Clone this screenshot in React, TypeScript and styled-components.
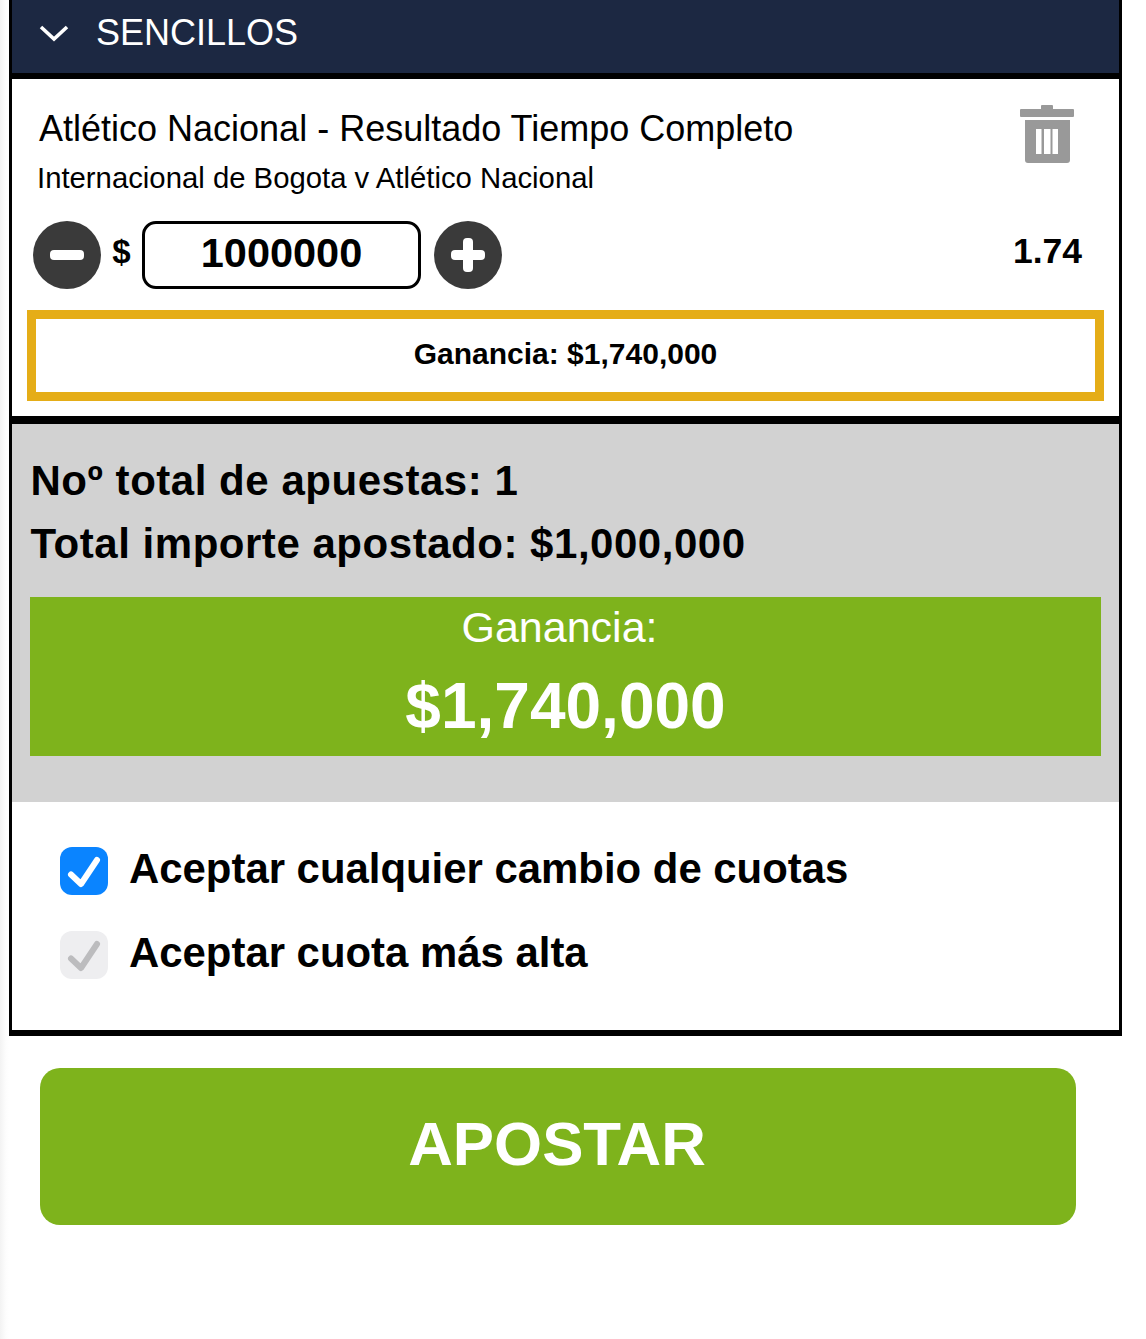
import React from 'react';
import styled, { createGlobalStyle } from 'styled-components';

const GlobalStyle = createGlobalStyle`
  html, body {
    margin: 0;
    padding: 0;
    background: #fff;
    font-family: "Liberation Sans", Arial, sans-serif;
    color: #000;
  }
`;

const Page = styled.div`
  width: 1146px;
  height: 1339px;
  box-sizing: border-box;
  padding-left: 9px;
  overflow: hidden;
  background: linear-gradient(90deg, #f3f3f3 0, #fdfdfd 6px, #fff 9px);
`;

const Slip = styled.section`
  width: 1113px;
  box-sizing: border-box;
  border: solid #000;
  border-width: 0 3px 6px;
`;

const Header = styled.header`
  height: 73px;
  box-sizing: border-box;
  display: flex;
  align-items: center;
  gap: 27px;
  padding: 0 0 8px 27px;
  background: #1c2842;
  color: #fff;
  font-size: 36px;
`;

const Bet = styled.div`
  border-top: 6px solid #000;
  border-bottom: 8px solid #000;
  background: #fff;
  height: 337px;
  padding: 0 15px;
  display: flex;
  flex-direction: column;
`;

const BetTop = styled.div`
  display: flex;
  justify-content: space-between;
  height: 142px;
`;

const BetInfo = styled.div`
  padding: 28.5px 0 0 12px;
`;

const Market = styled.div`
  font-size: 36px;
  line-height: 42px;
`;

const Match = styled.div`
  font-size: 29.3px;
  line-height: 34px;
  margin: 11.5px 0 0 -2px;
`;

const Trash = styled.svg`
  width: 56px;
  height: 60px;
  margin: 26px 28px 0 0;
  flex: none;
`;

const StakeRow = styled.div`
  display: flex;
  align-items: center;
  height: 68px;
  padding-left: 6px;
`;

const RoundButton = styled.svg`
  width: 68px;
  height: 68px;
  flex: none;
`;

const Dollar = styled.span`
  font-size: 33px;
  font-weight: 700;
  width: 41px;
  text-align: center;
  margin-top: -6px;
`;

const StakeInput = styled.div`
  width: 279px;
  height: 68px;
  box-sizing: border-box;
  border: 3px solid #000;
  border-radius: 14px;
  font-size: 41.5px;
  font-weight: 700;
  line-height: 58px;
  text-align: center;
  margin-right: 13px;
`;

const Odds = styled.span`
  margin-left: auto;
  margin-right: 22px;
  margin-top: -8px;
  font-size: 35.5px;
  font-weight: 700;
`;

const Profit = styled.div`
  margin-top: 21px;
  width: 1077px;
  height: 91px;
  box-sizing: border-box;
  border: 9px solid #e5ad17;
  padding-bottom: 4px;
  font-size: 30px;
  font-weight: 700;
  display: flex;
  align-items: center;
  justify-content: center;
`;

const Summary = styled.div`
  height: 378px;
  box-sizing: border-box;
  background: #d2d2d2;
  padding: 25px 18px 0;
`;

const SummaryLine = styled.div`
  font-size: 42px;
  letter-spacing: 0.53px;
  font-weight: 700;
  line-height: 63px;
  padding-left: 0.5px;
`;

const Winnings = styled.div`
  margin-top: 22px;
  height: 159px;
  background: #7eb31c;
  color: #fff;
  text-align: center;
`;

const WinningsLabel = styled.div`
  font-size: 43px;
  line-height: 60px;
  padding-right: 12px;
`;

const WinningsValue = styled.div`
  font-size: 64px;
  font-weight: 700;
  line-height: 74px;
  margin-top: 12px;
`;

const Options = styled.div`
  height: 228px;
  box-sizing: border-box;
  background: #fff;
  padding: 45px 0 0 48px;
  display: flex;
  flex-direction: column;
  gap: 36px;
`;

const Option = styled.label`
  display: flex;
  align-items: center;
  gap: 21px;
  height: 48px;
  font-size: 41.9px;
  font-weight: 700;
`;

const OptionText = styled.span`
  margin-top: -4px;
`;

const Check = styled.svg`
  width: 48px;
  height: 48px;
  flex: none;
`;

const SubmitButton = styled.button`
  display: block;
  margin: 32px 0 0 31px;
  width: 1036px;
  height: 157px;
  border: 0;
  border-radius: 20px;
  background: #7eb31c;
  color: #fff;
  font-family: inherit;
  font-size: 61.8px;
  font-weight: 700;
  padding: 0 2px 6px 0;
`;

const CheckBox = ({ on }: { on: boolean }) => (
  <Check viewBox="0 0 48 48">
    <rect width="48" height="48" rx="12" fill={on ? '#0a84ff' : '#eeeef0'} />
    <path
      d="M11 27.5 L21 37 L37 13"
      fill="none"
      stroke={on ? '#fff' : '#bcbcbe'}
      strokeWidth="6"
      strokeLinecap="round"
      strokeLinejoin="round"
    />
  </Check>
);

const App = () => (
  <Page>
    <GlobalStyle />
    <Slip>
      <Header>
        <svg width="30" height="18" viewBox="0 0 30 18">
          <path d="M2 3 L15 15 L28 3" fill="none" stroke="#fff" strokeWidth="3.6" />
        </svg>
        SENCILLOS
      </Header>
      <Bet>
        <BetTop>
          <BetInfo>
            <Market>Atlético Nacional - Resultado Tiempo Completo</Market>
            <Match>Internacional de Bogota v Atlético Nacional</Match>
          </BetInfo>
          <Trash viewBox="0 0 56 60" fill="#999">
            <path d="M22 0 h10 a1 1 0 0 1 1 1 v3 h20 a1 1 0 0 1 1 1 v6 a1 1 0 0 1 -1 1 h-52 a1 1 0 0 1 -1 -1 v-6 a1 1 0 0 1 1 -1 h20 v-3 a1 1 0 0 1 1 -1 z" />
            <path
              fillRule="evenodd"
              d="M5 15 h45 v40 a3 3 0 0 1 -3 3 h-39 a3 3 0 0 1 -3 -3 z M16 24 v25 h5.5 v-25 z M24 24 v25 h6.5 v-25 z M32.5 24 v25 h5.5 v-25 z"
            />
          </Trash>
        </BetTop>
        <StakeRow>
          <RoundButton viewBox="0 0 68 68">
            <circle cx="34" cy="34" r="34" fill="#3a3a3a" />
            <rect x="17" y="29" width="34" height="10" rx="4" fill="#fff" />
          </RoundButton>
          <Dollar>$</Dollar>
          <StakeInput>1000000</StakeInput>
          <RoundButton viewBox="0 0 68 68">
            <circle cx="34" cy="34" r="34" fill="#3a3a3a" />
            <rect x="17" y="29" width="34" height="10" rx="4" fill="#fff" />
            <rect x="29" y="17" width="10" height="34" rx="4" fill="#fff" />
          </RoundButton>
          <Odds>1.74</Odds>
        </StakeRow>
        <Profit>Ganancia: $1,740,000</Profit>
      </Bet>
      <Summary>
        <SummaryLine>Noº total de apuestas: 1</SummaryLine>
        <SummaryLine>Total importe apostado: $1,000,000</SummaryLine>
        <Winnings>
          <WinningsLabel>Ganancia:</WinningsLabel>
          <WinningsValue>$1,740,000</WinningsValue>
        </Winnings>
      </Summary>
      <Options>
        <Option>
          <CheckBox on />
          <OptionText>Aceptar cualquier cambio de cuotas</OptionText>
        </Option>
        <Option>
          <CheckBox on={false} />
          <OptionText>Aceptar cuota más alta</OptionText>
        </Option>
      </Options>
    </Slip>
    <SubmitButton>APOSTAR</SubmitButton>
  </Page>
);

export default App;
